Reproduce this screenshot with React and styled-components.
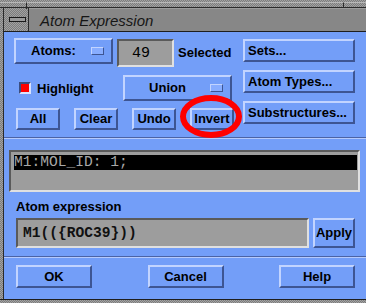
import React from 'react';
import styled, { createGlobalStyle } from 'styled-components';

const BLUE = '#739ef8';
const LIGHT = '#c2d4ff';
const DARK = '#3d5593';
const UI_FONT = '"Liberation Sans", Arial, sans-serif';
const MONO = '"Liberation Mono", "Courier New", monospace';

const GlobalStyle = createGlobalStyle`
  html, body { margin: 0; padding: 0; background: #8a8a8a; }
  * { box-sizing: border-box; }
`;

const Window = styled.div`
  position: relative;
  width: 366px;
  height: 303px;
  display: flex;
  flex-direction: column;
  background: repeating-conic-gradient(#7c7c7c 0 25%, #a2a2a2 0 50%) 0 0 / 2px 2px;
  overflow: hidden;
`;

const TopStrip = styled.div`
  height: 8px;
  display: flex;
  border-bottom: 1px solid #2a2a2a;
`;

const StripPart = styled.div`
  height: 100%;
  width: ${p => p.$w ? `${p.$w}px` : 'auto'};
  flex: ${p => p.$w ? 'none' : 1};
  border-right: ${p => p.$edge ? '1px solid #2a2a2a' : 'none'};
  border-top: 1px solid #b8b8b8;
  margin-top: 2px;
`;

const TitleRow = styled.div`
  height: 24px;
  margin-left: 3px;
  display: flex;
  border-bottom: 1px solid #1e1e1e;
  border-left: 1px solid #2a2a2a;
`;

const CloseBox = styled.div`
  width: 25px;
  display: flex;
  align-items: center;
  justify-content: center;
  border-right: 1px solid #2a2a2a;
`;

const CloseBar = styled.div`
  width: 17px;
  height: 5px;
  margin-left: 2px;
  background: #9a9a9a;
  border: 1px solid #1a1a1a;
`;

const TitleArea = styled.div`
  flex: 1;
  background: #878787;
  border-top: 1px solid #9c9c9c;
  display: flex;
  align-items: center;
  padding-left: 11px;
  font: italic 15px "Liberation Sans", Arial, sans-serif;
  color: #161616;
`;

const Middle = styled.div`
  display: flex;
  height: 267px;
`;

const LeftFrame = styled.div`
  width: 4px;
  border-right: 1px solid #2a2a2a;
`;

const Body = styled.div`
  position: relative;
  flex: 1;
  background: ${BLUE};
  display: flex;
  flex-direction: column;
  font: bold 13px ${UI_FONT};
  color: #000;
`;

const BottomFrame = styled.div`
  flex: 1;
  border-top: 1px solid #1e1e1e;
`;

const TopSection = styled.div`
  display: flex;
  padding: 6px 0 0 10px;
  gap: 9px;
`;

const LeftCol = styled.div`
  width: 220px;
  display: flex;
  flex-direction: column;
`;

const RightCol = styled.div`
  width: 112px;
  margin-top: 1px;
  display: flex;
  flex-direction: column;
  gap: 8px;
`;

const Row = styled.div`
  display: flex;
  align-items: ${p => p.$align || 'center'};
  height: ${p => p.$h}px;
  margin-top: ${p => p.$mt || 0}px;
  padding: 0 ${p => p.$pr || 0}px 0 ${p => p.$pl || 0}px;
  gap: ${p => p.$gap || 0}px;
`;

const Button = styled.button`
  width: ${p => p.$w}px;
  height: ${p => p.$h || 23}px;
  margin: 0;
  padding: ${p => p.$left ? '0 0 1px 3px' : '0 0 1px 0'};
  background: ${BLUE};
  border: 2px solid;
  border-color: ${LIGHT} ${DARK} ${DARK} ${LIGHT};
  display: flex;
  align-items: center;
  justify-content: ${p => p.$left ? 'flex-start' : 'center'};
  font: bold 13px ${UI_FONT};
  color: #000;
  white-space: nowrap;
`;

const OptionButton = styled(Button)`
  justify-content: space-between;
  padding: 0 7px 1px 0;
`;

const OptionLabel = styled.span`
  flex: 1;
  text-align: center;
`;

const Indicator = styled.span`
  width: 13px;
  height: 8px;
  background: #88adff;
  border: 1px solid;
  border-color: ${LIGHT} ${DARK} ${DARK} ${LIGHT};
`;

const Sunken = styled.div`
  background: #9d9d9d;
  border: 2px solid;
  border-color: #5a5a5a #e0e0e0 #e0e0e0 #5a5a5a;
`;

const CountField = styled(Sunken)`
  width: 57px;
  height: 28px;
  margin: 1px 0 0 4px;
  padding: 0 0 0 13px;
  display: flex;
  align-items: center;
  font: 15px ${MONO};
`;

const Label = styled.span`
  margin-left: ${p => p.$ml || 0}px;
  align-self: center;
`;

const CheckBox = styled.span`
  width: 12px;
  height: 12px;
  margin-left: 5px;
  background: #ff0000;
  border: 2px solid;
  border-color: #3b4d80 #d8e2ff #d8e2ff #3b4d80;
`;

const UnionButton = styled(OptionButton)`
  margin: 0 2px 0 auto;
`;

const Separator = styled.div`
  height: 2px;
  margin-top: ${p => p.$mt}px;
  border-top: 1px solid #4b63a4;
  border-bottom: 1px solid #b6cafc;
`;

const ListSection = styled.div`
  padding: 11px 6px 0 5px;
`;

const ListBox = styled(Sunken)`
  height: 42px;
  padding: 3px 1px 0 3px;
`;

const SelectedLine = styled.div`
  height: 15px;
  background: #000;
  color: #a8a8a8;
  font: 14.6px/15px ${MONO};
  white-space: pre;
`;

const FieldLabel = styled.div`
  margin: 6px 0 0 12px;
  line-height: 18px;
`;

const ExprField = styled(Sunken)`
  flex: 1;
  height: 30px;
  padding-left: 5px;
  display: flex;
  align-items: center;
  font: bold 14.6px ${MONO};
  color: #111;
`;

const ActionRow = styled.div`
  display: flex;
  justify-content: space-between;
  margin-top: 7px;
  padding: 0 11px 0 12px;
`;

const Annotation = styled.svg`
  position: absolute;
  left: 176px;
  top: 63px;
  overflow: visible;
`;

export default function App() {
  return (
    <>
      <GlobalStyle />
      <Window>
        <TopStrip>
          <StripPart $w={27} $edge />
          <StripPart $edge />
          <StripPart $w={22} />
        </TopStrip>
        <TitleRow>
          <CloseBox><CloseBar /></CloseBox>
          <TitleArea>Atom Expression</TitleArea>
        </TitleRow>
        <Middle>
          <LeftFrame />
          <Body>
            <TopSection>
              <LeftCol>
                <Row $h={29} $align="flex-start">
                  <OptionButton $w={99} $h={26}>
                    <OptionLabel>Atoms:</OptionLabel>
                    <Indicator />
                  </OptionButton>
                  <CountField>49</CountField>
                  <Label $ml={4}>Selected</Label>
                </Row>
                <Row $h={26} $mt={8}>
                  <CheckBox />
                  <Label $ml={6}>Highlight</Label>
                  <UnionButton $w={109} $h={26}>
                    <OptionLabel>Union</OptionLabel>
                    <Indicator />
                  </UnionButton>
                </Row>
                <Row $h={22} $mt={7} $pl={2} $gap={14}>
                  <Button $w={44} $h={22}>All</Button>
                  <Button $w={44} $h={22}>Clear</Button>
                  <Button $w={44} $h={22}>Undo</Button>
                  <Button $w={44} $h={22}>Invert</Button>
                </Row>
              </LeftCol>
              <RightCol>
                <Button $w={112} $left>Sets...</Button>
                <Button $w={112} $left>Atom Types...</Button>
                <Button $w={112} $left>Substructures...</Button>
              </RightCol>
            </TopSection>
            <Separator $mt={7} />
            <ListSection>
              <ListBox>
                <SelectedLine>M1:MOL_ID: 1;</SelectedLine>
              </ListBox>
            </ListSection>
            <FieldLabel>Atom expression</FieldLabel>
            <Row $h={30} $mt={2} $pl={12} $pr={11} $gap={4}>
              <ExprField>M1(({'{'}ROC39{'}'}))</ExprField>
              <Button $w={42} $h={30}>Apply</Button>
            </Row>
            <Separator $mt={8} />
            <ActionRow>
              <Button $w={76}>OK</Button>
              <Button $w={76}>Cancel</Button>
              <Button $w={76}>Help</Button>
            </ActionRow>
            <Annotation width="62" height="43" viewBox="0 0 62 43">
              <ellipse cx="31" cy="21.5" rx="28" ry="18.5" fill="none" stroke="#ff0000" strokeWidth="6" />
            </Annotation>
          </Body>
        </Middle>
        <BottomFrame />
      </Window>
    </>
  );
}
